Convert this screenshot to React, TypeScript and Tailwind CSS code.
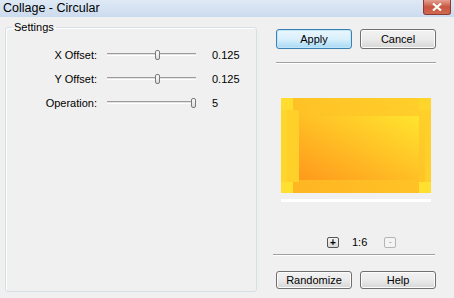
import React from 'react';

interface SliderRowProps {
  label: string;
  value: string;
  pos: number; // thumb centre in px from track start
}

const font = { fontFamily: '"Liberation Sans", Arial, sans-serif' };

// Classic trackbar: thin sunken groove with a small upright thumb
const SliderRow: React.FC<SliderRowProps> = ({ label, value, pos }) => (
  <div className="flex items-center h-[14px]">
    <div className="w-[91px] text-right text-[11px] leading-none text-black">{label}</div>
    <div className="relative ml-[10px] w-[89px] h-[14px]">
      <div className="absolute left-0 right-0 top-[5px] h-[3px] border-t border-[#9c9c9c] border-b border-b-white bg-[#e3e3e3]" />
      <div
        className="absolute top-[2px] w-[5px] h-[10px] rounded-[2px] border border-[#7a7a7a] bg-gradient-to-b from-[#fdfdfd] to-[#dcdcdc]"
        style={{ left: pos - 2 }}
      />
    </div>
    <div className="ml-[16px] text-[11px] leading-none text-black">{value}</div>
  </div>
);

const Btn: React.FC<{ label: string; primary?: boolean; h: string }> = ({ label, primary, h }) => (
  <button
    className={
      primary
        ? `w-[76px] ${h} rounded-[3px] border border-[#3c7fb1] bg-gradient-to-b from-[#eaf6fd] via-[#d9f0fc] to-[#a7d9f5] text-[11px] text-black shadow-[inset_0_0_0_1px_#c2e6f9]`
        : `w-[76px] ${h} rounded-[3px] border border-[#707070] bg-gradient-to-b from-[#f2f2f2] via-[#ebebeb] to-[#d6d6d6] text-[11px] text-black shadow-[inset_0_0_0_1px_#fcfcfc]`
    }
  >
    {label}
  </button>
);

const Preview: React.FC = () => (
  <svg width="150" height="95" viewBox="0 0 150 95">
    <defs>
      <linearGradient id="inner" x1="0" y1="1" x2="1" y2="0">
        <stop offset="0" stopColor="#ff991c" />
        <stop offset="0.55" stopColor="#ffc326" />
        <stop offset="1" stopColor="#ffe42e" />
      </linearGradient>
      <linearGradient id="band" x1="0" y1="1" x2="1" y2="0">
        <stop offset="0" stopColor="#ffb522" />
        <stop offset="1" stopColor="#ffd02a" />
      </linearGradient>
    </defs>
    <rect x="0" y="0" width="150" height="95" fill="#ffd52b" />
    <rect x="12" y="0" width="132" height="95" fill="url(#band)" />
    <rect x="0" y="12" width="150" height="72" fill="#ffd02a" />
    <rect x="18" y="12" width="126" height="78" fill="url(#band)" />
    <rect x="18" y="18" width="120" height="64" fill="url(#inner)" />
    <rect x="0" y="0" width="12" height="12" fill="#ffdc2e" />
    <rect x="138" y="0" width="12" height="12" fill="#ffd42b" />
    <rect x="0" y="84" width="12" height="11" fill="#ffdf30" />
    <rect x="138" y="84" width="12" height="11" fill="#ffe030" />
    <rect x="0" y="12" width="6" height="72" fill="#ffdc2e" opacity="0.6" />
  </svg>
);

export default function App() {
  return (
    <div className="w-[454px] h-[298px] bg-[#f0f0f0] overflow-hidden" style={font}>
      {/* title bar */}
      <div className="h-[17px] flex items-center justify-between bg-gradient-to-b from-[#dfe9f5] to-[#cbdbee]">
        <span className="pl-[3px] text-[12.5px] leading-none text-black">Collage - Circular</span>
        <div className="mr-[3px] self-start w-[28px] h-[15px] rounded-b-[3px] border border-t-0 border-[#8c3a33] bg-gradient-to-b from-[#e3a092] via-[#c9553f] to-[#cf6a52] flex items-center justify-center">
          <svg width="10" height="8" viewBox="0 0 10 8">
            <path d="M1 0.5 L9 7.5 M9 0.5 L1 7.5" stroke="#ffffff" strokeWidth="2.2" />
          </svg>
        </div>
      </div>

      <div className="flex">
        {/* settings group */}
        <fieldset className="ml-[5px] mt-[5px] w-[252px] h-[270px] rounded-[3px] border border-[#d5dfe5] shadow-[inset_1px_1px_0_#ffffff] px-0">
          <legend className="ml-[6px] px-[2px] text-[11px] leading-none text-black">Settings</legend>
          <div className="flex flex-col gap-[10px] pt-[15px]">
            <SliderRow label="X Offset:" value="0.125" pos={50} />
            <SliderRow label="Y Offset:" value="0.125" pos={50} />
            <SliderRow label="Operation:" value="5" pos={86} />
          </div>
        </fieldset>

        {/* right column */}
        <div className="ml-[19px] w-[160px] flex flex-col">
          <div className="mt-[12px] flex gap-[8px]">
            <Btn label="Apply" primary h="h-[20px]" />
            <Btn label="Cancel" h="h-[20px]" />
          </div>
          <div className="mt-[13px] h-[2px] border-t border-[#a0a0a0] border-b border-b-white" />
          <div className="mt-[34px] ml-[5px]">
            <Preview />
          </div>
          <div className="mt-[6px] ml-[5px] w-[150px] h-[3px] bg-white" />
          <div className="mt-[35px] flex items-center h-[11px] pl-[51px]">
            <div className="w-[12px] h-[11px] rounded-[2px] border border-[#555] bg-gradient-to-b from-[#f4f4f4] to-[#d8d8d8] flex items-center justify-center text-[10px] leading-none text-black font-bold">
              +
            </div>
            <span className="ml-[13px] text-[11px] leading-none text-black">1:6</span>
            <div className="ml-[17px] w-[12px] h-[11px] rounded-[2px] border border-[#b5b5b5] bg-[#f4f4f4] flex items-center justify-center text-[9px] leading-none text-[#a0a0a0]">
              -
            </div>
          </div>
          <div className="mt-[6px] -ml-[3px] w-[162px] h-[2px] border-t border-[#a0a0a0] border-b border-b-white" />
          <div className="mt-[15px] flex gap-[8px]">
            <Btn label="Randomize" h="h-[18px]" />
            <Btn label="Help" h="h-[18px]" />
          </div>
        </div>
      </div>
    </div>
  );
}
